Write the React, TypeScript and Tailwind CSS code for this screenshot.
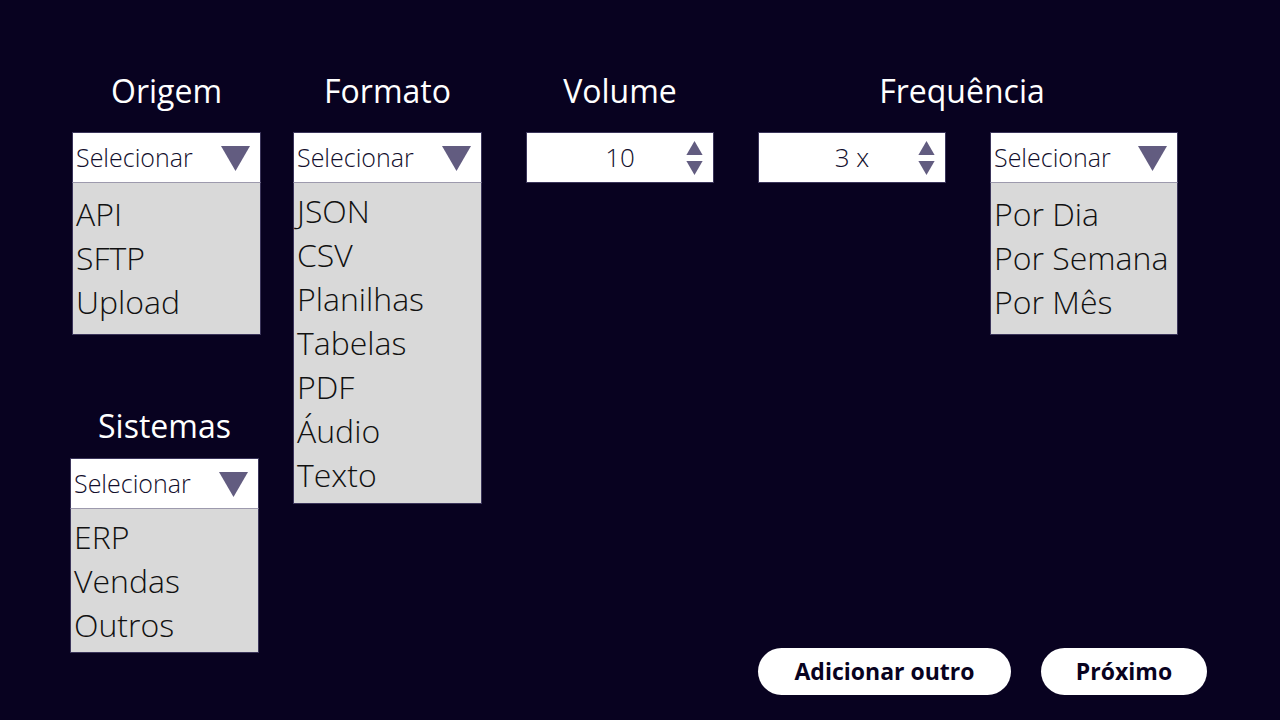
import React from 'react';

type SelectBoxProps = {
  items: string[];
  listPad: string;
  width?: string;
};

const Triangle: React.FC<{ className?: string; up?: boolean }> = ({ className, up }) => (
  <svg viewBox="0 0 29 25" className={className}>
    <polygon points={up ? '14.5,0 29,25 0,25' : '0,0 29,0 14.5,25'} fill="#625c80" />
  </svg>
);

const SelectBox: React.FC<SelectBoxProps> = ({ items, listPad, width = 'w-[189px]' }) => (
  <div className={width}>
    <div className="h-[51px] bg-white border border-[#3b355a] border-b-[#9d9aad] flex items-center justify-between pl-[3px] pr-[10px]">
      <span className="text-[25px] font-light text-[#120e2c]">Selecionar</span>
      <Triangle className="w-[29px] h-[25px] mt-[1px]" />
    </div>
    <div className={`bg-[#d9d9d9] border-x border-b border-[#3b355a] pl-[3px] ${listPad}`}>
      {items.map((item) => (
        <div key={item} className="text-[32px] leading-[44px] font-light text-[#111]">
          {item}
        </div>
      ))}
    </div>
  </div>
);

const NumberBox: React.FC<{ value: string }> = ({ value }) => (
  <div className="w-[188px] h-[51px] bg-white border border-[#3b355a] flex items-center pr-[10px]">
    <span className="flex-1 text-center pl-[27px] text-[26px] font-light text-[#120e2c]">{value}</span>
    <div className="flex flex-col gap-[6px]">
      <Triangle up className="w-[17px] h-[14px]" />
      <Triangle className="w-[17px] h-[14px]" />
    </div>
  </div>
);

const Title: React.FC<{ children: React.ReactNode; className?: string }> = ({ children, className }) => (
  <h2 className={`h-[40px] leading-[40px] text-[32px] text-white text-center ${className ?? ''}`}>{children}</h2>
);

export default function App() {
  return (
    <div
      className="w-full h-screen bg-[#080220] flex pl-[70px] pt-[71px] pb-[25px] overflow-hidden"
      style={{ fontFamily: '"Open Sans", "Noto Sans", sans-serif' }}
    >
      <div className="w-[191px] flex flex-col">
        <Title className="mb-[21px] pl-[2px]">Origem</Title>
        <div className="ml-[2px]">
          <SelectBox items={['API', 'SFTP', 'Upload']} listPad="pt-[9px] pb-[10px]" />
        </div>
        <Title className="mt-[71px] mb-[12px] pr-[2px]">Sistemas</Title>
        <SelectBox items={['ERP', 'Vendas', 'Outros']} listPad="pt-[6px] pb-[5px]" />
      </div>

      <div className="flex-1 flex flex-col">
        <div className="flex">
          <div className="ml-[32px] flex flex-col">
            <Title className="mb-[21px]">Formato</Title>
            <SelectBox
              items={['JSON', 'CSV', 'Planilhas', 'Tabelas', 'PDF', 'Áudio', 'Texto']}
              listPad="pt-[6px] pb-[6px]"
            />
          </div>

          <div className="ml-[44px] flex flex-col">
            <Title className="mb-[21px]">Volume</Title>
            <NumberBox value="10" />
          </div>

          <div className="ml-[44px] flex flex-col">
            <Title className="mb-[21px] pr-[12px]">Frequência</Title>
            <div className="flex gap-[44px]">
              <NumberBox value="3 x" />
              <SelectBox
                width="w-[188px]"
                items={['Por Dia', 'Por Semana', 'Por Mês']}
                listPad="pt-[9px] pb-[10px]"
              />
            </div>
          </div>
        </div>

        <div className="mt-auto flex justify-end gap-[30px] pr-[73px]">
          <button className="w-[253px] h-[47px] rounded-full bg-white text-[23px] font-bold text-[#080220]">
            Adicionar outro
          </button>
          <button className="w-[166px] h-[47px] rounded-full bg-white text-[23px] font-bold text-[#080220]">
            Próximo
          </button>
        </div>
      </div>
    </div>
  );
}
